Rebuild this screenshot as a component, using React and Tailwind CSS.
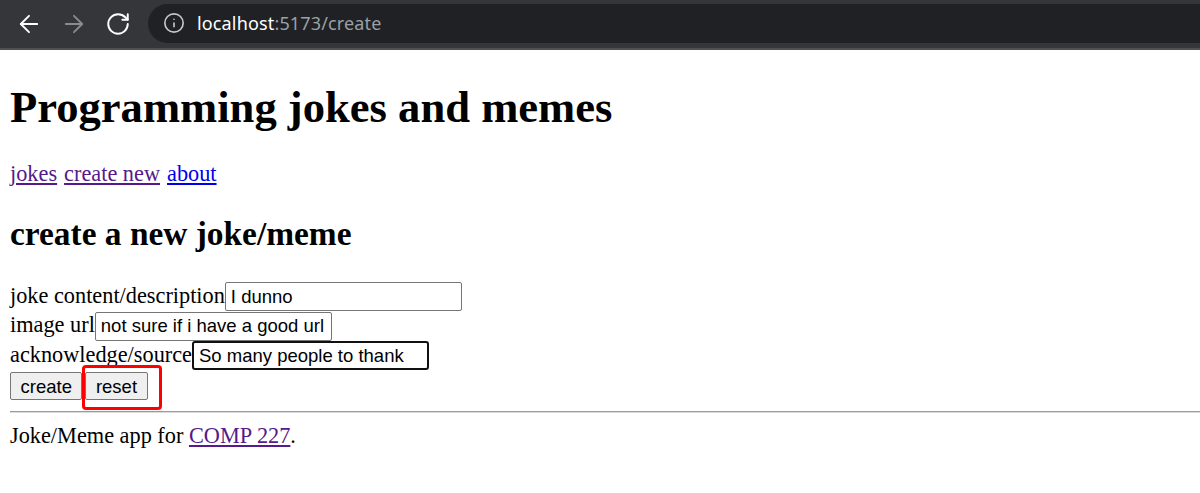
import { ArrowLeft, ArrowRight, RotateCw, Info } from 'lucide-react'

const serif = { fontFamily: '"Liberation Serif", "Times New Roman", serif' }
const sans = { fontFamily: '"Liberation Sans", Arial, sans-serif' }

function BrowserBar() {
  return (
    <div className="h-[50px] bg-[#35363a] border-b-2 border-[#505050] flex items-center">
      <div className="flex items-center w-[148px] pl-[15px] gap-[17px]">
        <ArrowLeft size={28} strokeWidth={1.6} className="text-white" />
        <ArrowRight size={28} strokeWidth={1.6} className="text-[#8b8c8e]" />
        <RotateCw size={26} strokeWidth={1.8} className="text-white" />
      </div>
      <div className="flex-1 h-[39px] mt-[-2px] bg-[#202124] rounded-l-full flex items-center pl-[15px] gap-[12px]">
        <Info size={22} strokeWidth={1.8} className="text-[#c4c7c5]" />
        <span
          className="text-[18px] tracking-[0.15px]"
          style={{ fontFamily: '"Noto Sans", "Open Sans", sans-serif' }}
        >
          <span className="text-white">localhost</span>
          <span className="text-[#9aa0a6]">:5173/create</span>
        </span>
      </div>
    </div>
  )
}

function Field({ label, value, focused }) {
  return (
    <div className="h-[29.5px] flex items-baseline">
      <span className="text-[22.3px] leading-[25px] text-black">{label}</span>
      <input
        defaultValue={value}
        className={`w-[237px] h-[29px] text-[18.5px] text-black bg-white ${
          focused
            ? 'border-2 border-[#101010] rounded-[3px] px-[5px]'
            : 'border border-[#767676] rounded-[2px] px-[5px]'
        }`}
        style={sans}
      />
    </div>
  )
}

export default function App() {
  return (
    <div className="w-[1200px] h-[493px] bg-white overflow-hidden">
      <BrowserBar />
      <div className="px-[10px]" style={serif}>
        <h1 className="mt-[31.5px] text-[44.6px] leading-[51px] font-bold text-black">
          Programming jokes and memes
        </h1>

        {/* nav */}
        <nav className="mt-[28px] flex gap-[7px] text-[22.3px] leading-[26px]">
          <a href="#" className="underline text-[#551a8b]">jokes</a>
          <a href="#" className="underline text-[#551a8b]">create new</a>
          <a href="#" className="underline text-[#0000ee]">about</a>
        </nav>

        <h2 className="mt-[28px] text-[33.4px] leading-[38px] font-bold text-black">
          create a new joke/meme
        </h2>

        <form className="mt-[29.5px]" onSubmit={e => e.preventDefault()}>
          <Field label="joke content/description" value="I dunno" />
          <Field label="image url" value="not sure if i have a good url" />
          <Field label="acknowledge/source" value="So many people to thank" focused />
          <div className="mt-[1.5px] flex gap-[3px] text-[18.5px]" style={sans}>
            <button className="h-[28px] px-[9.5px] bg-[#efefef] border border-[#767676] rounded-[2px] text-black">
              create
            </button>
            <span className="relative">
              <button
                type="reset"
                className="h-[28px] px-[9.5px] bg-[#efefef] border border-[#767676] rounded-[2px] text-black"
              >
                reset
              </button>
              <span className="absolute left-[-3px] right-[-14px] top-[-7px] bottom-[-9px] border-[3px] border-[#ff0000] rounded-[4px] pointer-events-none" />
            </span>
          </div>
        </form>

        <hr className="mt-[10px] mr-[-10px] h-0 border-t border-b border-t-[#9b9b9b] border-b-[#dcdcdc]" />

        <p className="mt-[10.5px] text-[22.3px] leading-[26px] text-black">
          Joke/Meme app for{' '}
          <a href="#" className="underline text-[#551a8b]">COMP 227</a>.
        </p>
      </div>
    </div>
  )
}
